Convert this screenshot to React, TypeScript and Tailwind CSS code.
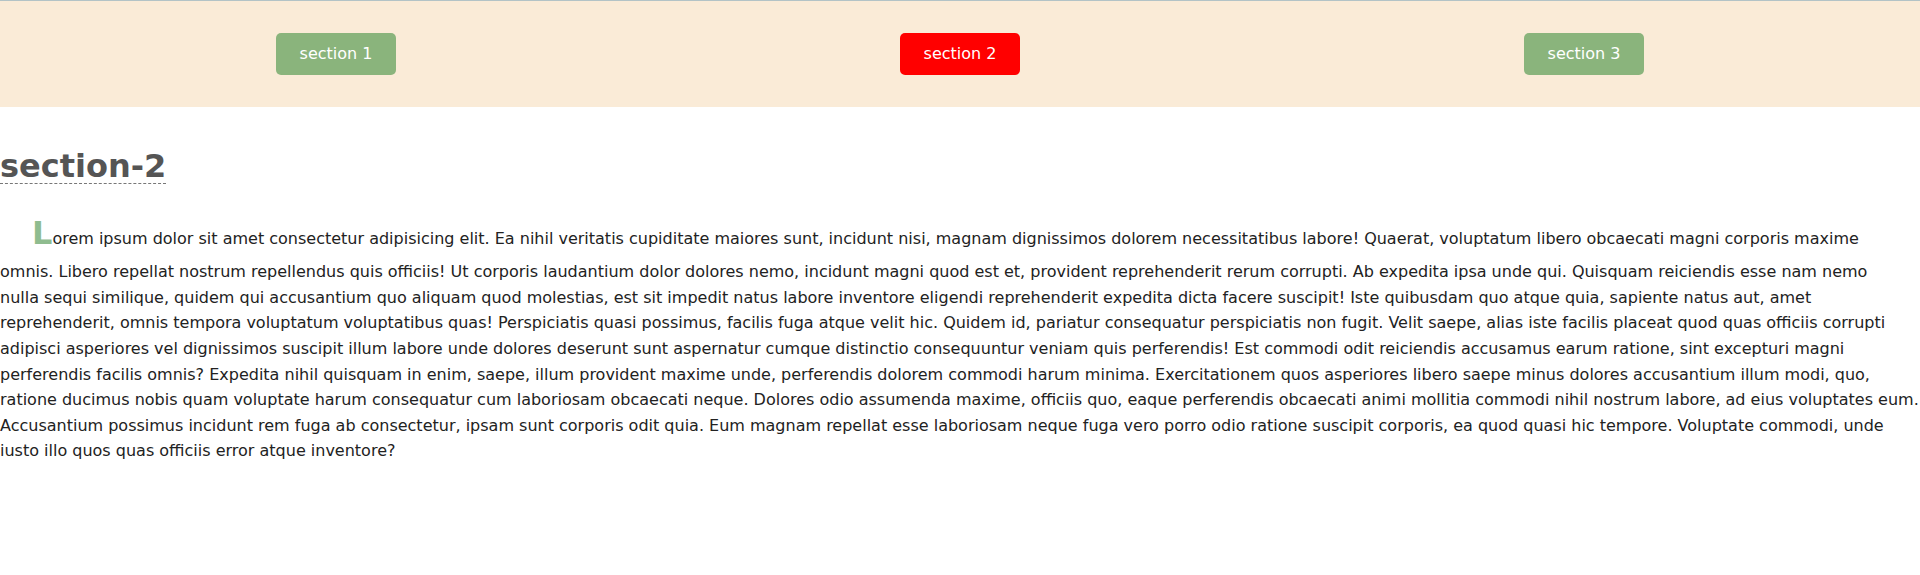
const SECTIONS = ["section 1", "section 2", "section 3"];
const ACTIVE = "section 2";

const LINES = [
  "Lorem ipsum dolor sit amet consectetur adipisicing elit. Ea nihil veritatis cupiditate maiores sunt, incidunt nisi, magnam dignissimos dolorem necessitatibus labore! Quaerat, voluptatum libero obcaecati magni corporis maxime",
  "omnis. Libero repellat nostrum repellendus quis officiis! Ut corporis laudantium dolor dolores nemo, incidunt magni quod est et, provident reprehenderit rerum corrupti. Ab expedita ipsa unde qui. Quisquam reiciendis esse nam nemo",
  "nulla sequi similique, quidem qui accusantium quo aliquam quod molestias, est sit impedit natus labore inventore eligendi reprehenderit expedita dicta facere suscipit! Iste quibusdam quo atque quia, sapiente natus aut, amet",
  "reprehenderit, omnis tempora voluptatum voluptatibus quas! Perspiciatis quasi possimus, facilis fuga atque velit hic. Quidem id, pariatur consequatur perspiciatis non fugit. Velit saepe, alias iste facilis placeat quod quas officiis corrupti",
  "adipisci asperiores vel dignissimos suscipit illum labore unde dolores deserunt sunt aspernatur cumque distinctio consequuntur veniam quis perferendis! Est commodi odit reiciendis accusamus earum ratione, sint excepturi magni",
  "perferendis facilis omnis? Expedita nihil quisquam in enim, saepe, illum provident maxime unde, perferendis dolorem commodi harum minima. Exercitationem quos asperiores libero saepe minus dolores accusantium illum modi, quo,",
  "ratione ducimus nobis quam voluptate harum consequatur cum laboriosam obcaecati neque. Dolores odio assumenda maxime, officiis quo, eaque perferendis obcaecati animi mollitia commodi nihil nostrum labore, ad eius voluptates eum.",
  "Accusantium possimus incidunt rem fuga ab consectetur, ipsam sunt corporis odit quia. Eum magnam repellat esse laboriosam neque fuga vero porro odio ratione suscipit corporis, ea quod quasi hic tempore. Voluptate commodi, unde",
  "iusto illo quos quas officiis error atque inventore?",
];

export default function App() {
  return (
    <div className="min-h-[575px] bg-white font-['DejaVu_Sans',Verdana,sans-serif] text-[16px] text-[#222]">
      <nav className="grid grid-cols-3 border-t border-[#b3c3c6] bg-[#faebd7] px-6 py-8">
        {SECTIONS.map((label) => {
          const active = label === ACTIVE;
          return (
            <div key={label} className="flex justify-center">
              <button
                type="button"
                className={`h-[42px] w-[120px] rounded-[5px] text-[16px] text-white ${
                  active ? "bg-[#ff0000]" : "bg-[#8ab47c]"
                }`}
              >
                {label}
              </button>
            </div>
          );
        })}
      </nav>

      <section>
        <h1 className="mt-[42px] inline-block border-b border-dashed border-[#777] text-[32px] font-bold leading-[34px] text-[#555]">
          section-2
        </h1>
        <p className="mt-[24px] whitespace-nowrap indent-8 leading-[1.6] first-letter:text-[32px] first-letter:font-bold first-letter:text-[#8fbc8f]">
          {LINES.map((line, i) => (
            <span key={i}>
              {line}
              {i < LINES.length - 1 ? <br /> : null}
            </span>
          ))}
        </p>
      </section>
    </div>
  );
}
